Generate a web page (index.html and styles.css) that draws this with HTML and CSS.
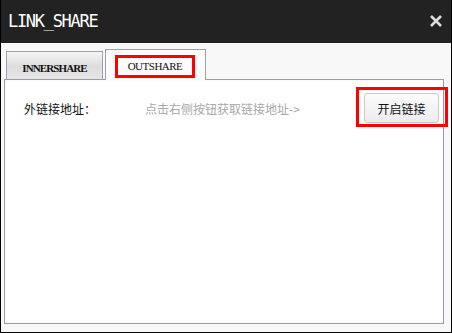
FILE: index.html
```html
<!DOCTYPE html>
<html>
<head>
<meta charset="utf-8">
<link rel="stylesheet" href="styles.css">
</head>
<body>
<div class="window">
  <div class="titlebar">
    <span class="title">LINK_SHARE</span>
    <svg class="close" width="12" height="12" viewBox="0 0 12 12"><path d="M1 1 L11 11 M11 1 L1 11" stroke="#dcdcdc" stroke-width="2.6" fill="none"/></svg>
  </div>
  <div class="body">
    <div class="tabs">
      <div class="tab">INNERSHARE</div>
      <div class="tab active"><span class="mark">OUTSHARE</span></div>
    </div>
    <div class="panel">
      <div class="row">
        <span class="label">外链接地址：</span>
        <span class="hint">点击右侧按钮获取链接地址-&gt;</span>
        <button class="btn">开启链接</button>
      </div>
    </div>
  </div>
</div>
</body>
</html>
```
FILE: styles.css
```css
html, body {
  margin: 0;
  padding: 0;
  background: #fff;
}
.window {
  width: 452px;
  height: 333px;
  box-sizing: border-box;
  border: 1px solid #000;
  border-top: none;
  background: #f8f8f8;
  display: flex;
  flex-direction: column;
}
.titlebar {
  height: 43px;
  flex: none;
  background: #222222;
  display: flex;
  align-items: center;
  justify-content: space-between;
  padding: 0 9px 2px 7px;
  box-sizing: border-box;
}
.title {
  color: #ffffff;
  font-family: "DejaVu Sans Mono", monospace;
  font-size: 17px;
  letter-spacing: -1.3px;
  line-height: 18px;
}
.close {
  display: block;
  margin-top: 1px;
}
.body {
  flex: 1;
  display: flex;
  flex-direction: column;
  padding: 6px 7px 8px 3px;
}
.tabs {
  display: flex;
  align-items: flex-end;
  gap: 2px;
  padding-left: 2px;
  height: 30px;
  flex: none;
}
.tab {
  box-sizing: border-box;
  height: 28px;
  width: 97px;
  border: 1px solid #a0a0aa;
  border-bottom: none;
  background: linear-gradient(#f4f4f4 0%, #dcdcdc 55%, #e6e6e6 100%);
  font-family: "Liberation Serif", serif;
  font-weight: bold;
  font-size: 11px;
  letter-spacing: -0.9px;
  color: #111;
  display: flex;
  align-items: center;
  justify-content: center;
  padding-top: 4px;
}
.tab.active {
  height: 31px;
  width: 101px;
  margin-bottom: -1px;
  background: #fbfbfb;
  position: relative;
  z-index: 1;
  align-items: flex-start;
  justify-content: flex-start;
  padding: 5px 0 0 9px;
  font-weight: normal;
  letter-spacing: -0.5px;
}
.mark {
  box-sizing: border-box;
  width: 80px;
  height: 23px;
  border: 3px solid #ff0000;
  display: flex;
  align-items: center;
  justify-content: center;
  padding-bottom: 2px;
}
.panel {
  flex: 1;
  border: 1px solid #9c9ca8;
  background: #ffffff;
  padding: 13px 4px 0 19px;
  box-shadow: inset 0 0 2px #e8e8ee;
}
.row {
  display: flex;
  align-items: center;
  font-family: "Noto Sans CJK SC", sans-serif;
  font-size: 12px;
}
.label {
  width: 121px;
  color: #111;
}
.hint {
  color: #a8a8a8;
}
.btn {
  margin-left: auto;
  width: 75px;
  height: 30px;
  border: 1px solid #c8c8c8;
  border-radius: 3px;
  background: linear-gradient(#fcfcfc, #ececec);
  font-family: "Noto Sans CJK SC", sans-serif;
  font-size: 12px;
  color: #111;
  padding: 0;
  position: relative;
}
.btn::after {
  content: "";
  position: absolute;
  top: -7px;
  left: -9px;
  right: -10px;
  bottom: -5px;
  border: 3px solid #ff0000;
}
```
